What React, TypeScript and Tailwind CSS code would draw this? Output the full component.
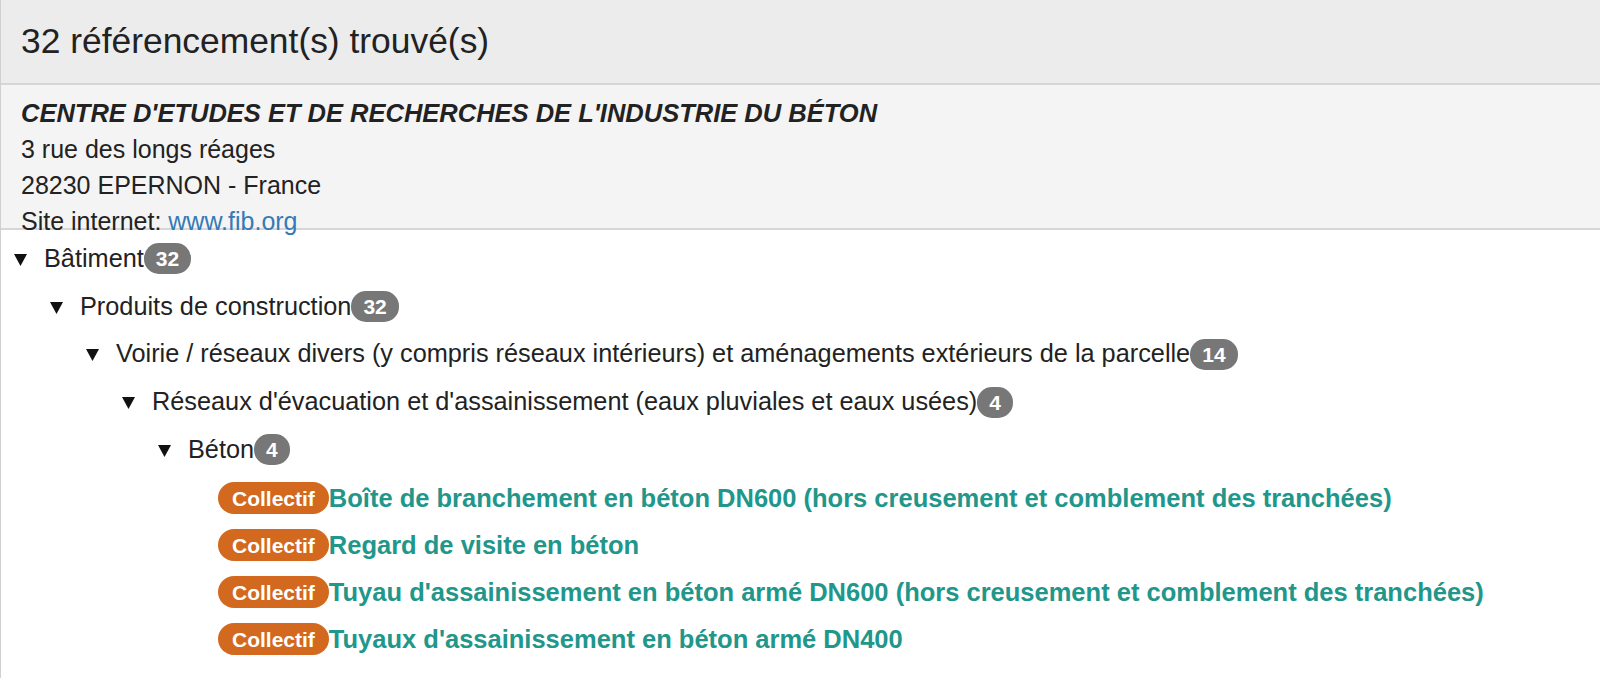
import React from "react";

type Node = { label: string; count: number; level: number };

const tree: Node[] = [
  { label: "Bâtiment", count: 32, level: 0 },
  { label: "Produits de construction", count: 32, level: 1 },
  {
    label:
      "Voirie / réseaux divers (y compris réseaux intérieurs) et aménagements extérieurs de la parcelle",
    count: 14,
    level: 2,
  },
  {
    label: "Réseaux d'évacuation et d'assainissement (eaux pluviales et eaux usées)",
    count: 4,
    level: 3,
  },
  { label: "Béton", count: 4, level: 4 },
];

const indent = ["pl-[13px]", "pl-[49px]", "pl-[85px]", "pl-[121px]", "pl-[157px]"];

const products = [
  "Boîte de branchement en béton DN600 (hors creusement et comblement des tranchées)",
  "Regard de visite en béton",
  "Tuyau d'assainissement en béton armé DN600 (hors creusement et comblement des tranchées)",
  "Tuyaux d'assainissement en béton armé DN400",
];

function Caret() {
  return (
    <svg width="13" height="12" viewBox="0 0 13 12" className="shrink-0 mt-[2px]">
      <polygon points="0,0 13,0 6.5,12" fill="#111" />
    </svg>
  );
}

function Count({ n }: { n: number }) {
  return (
    <span className="inline-flex items-center justify-center h-[31px] px-[12px] rounded-[15px] bg-[#777] text-white font-bold text-[21px] leading-none">
      {n}
    </span>
  );
}

export default function App() {
  return (
    <div
      className="min-h-screen bg-white border-l border-[#d0d0d0] text-[#333]"
      style={{ fontFamily: '"Liberation Sans", Helvetica, Arial, sans-serif' }}
    >
      {/* Result header */}
      <div className="h-[85px] bg-[#ececec] border-b-2 border-[#d6d6d6] flex items-center px-[20px]">
        <h1 className="text-[35.4px] font-normal text-[#222] leading-none">
          32 référencement(s) trouvé(s)
        </h1>
      </div>

      {/* Organisation */}
      <div className="h-[145px] bg-[#f4f4f4] border-b-2 border-[#d6d6d6] pt-[10px] px-[20px] text-[25px] leading-[36px] text-[#222]">
        <div className="font-bold italic text-[25.5px]">
          CENTRE D'ETUDES ET DE RECHERCHES DE L'INDUSTRIE DU BÉTON
        </div>
        <div>3 rue des longs réages</div>
        <div>28230 EPERNON - France</div>
        <div>
          Site internet:{" "}
          <a href="#" className="text-[#337ab7]">
            www.fib.org
          </a>
        </div>
      </div>

      {/* Tree */}
      <div className="pt-[5px] text-[25.3px] text-[#222]">
        {tree.map((node) => (
          <div key={node.label} className={`h-[47.75px] flex items-center ${indent[node.level]}`}>
            <Caret />
            <span className="ml-[17px]">{node.label}</span>
            <Count n={node.count} />
          </div>
        ))}
        <div className="pt-[1px]">
          {products.map((p) => (
            <div key={p} className="h-[47px] flex items-center pl-[217px]">
              <span className="inline-flex items-center h-[32px] px-[14px] rounded-[16px] bg-[#d2691e] text-white font-bold text-[21px] leading-none">
                Collectif
              </span>
              <a href="#" className="font-bold text-[25.5px] text-[#21968a]">
                {p}
              </a>
            </div>
          ))}
        </div>
      </div>
    </div>
  );
}
